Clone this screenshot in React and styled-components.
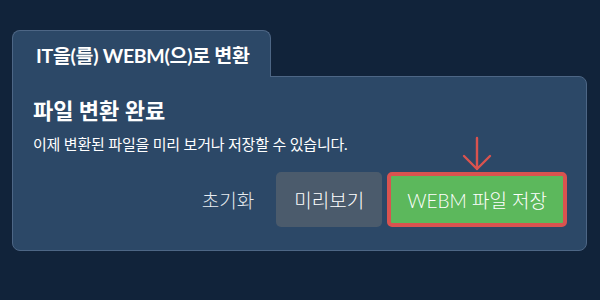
import React from "react";
import styled, { createGlobalStyle } from "styled-components";

const GlobalStyle = createGlobalStyle`
	html, body {
		margin: 0;
		background: #11233a;
	}
	body {
		font-family: Lato, "Noto Sans CJK KR", sans-serif;
		color: #fff;
	}
`;

const Page = styled.div`
	width: 600px;
	height: 300px;
	box-sizing: border-box;
	padding: 30px 13px 0 12px;
	display: flex;
	flex-direction: column;
	align-items: flex-start;
`;

const Tab = styled.div`
	position: relative;
	z-index: 1;
	margin-bottom: -1px;
	box-sizing: border-box;
	width: 259px;
	height: 47px;
	padding: 0 0 0 23px;
	display: flex;
	align-items: center;
	background: #2c4867;
	border: 1px solid #4d6685;
	border-bottom: none;
	border-radius: 8px 8px 0 0;
	font-size: 19.5px;
	font-weight: 700;
	letter-spacing: -0.3px;
`;

const Panel = styled.div`
	align-self: stretch;
	box-sizing: border-box;
	height: 175px;
	padding: 19px 19px 0 20px;
	background: #2c4867;
	border: 1px solid #4d6685;
	border-radius: 0 8px 8px 8px;
`;

const Title = styled.h2`
	margin: 0;
	font-size: 22px;
	font-weight: 700;
	line-height: 30px;
`;

const Subtitle = styled.p`
	margin: 7px 0 0;
	font-size: 15px;
	line-height: 22px;
	letter-spacing: -0.2px;
`;

const Actions = styled.div`
	display: flex;
	justify-content: flex-end;
	align-items: center;
	margin-top: 17px;
`;

const TextButton = styled.button`
	background: none;
	border: none;
	padding: 0;
	margin-right: 22px;
	color: #e6ebf0;
	font-family: inherit;
	font-size: 19px;
	font-weight: 300;
	cursor: pointer;
`;

const Button = styled.button`
	position: relative;
	box-sizing: border-box;
	height: 55px;
	padding: 0 ${p => (p.$primary ? "16px" : "18px")};
	margin-left: ${p => (p.$primary ? "5px" : "0")};
	background: ${p => (p.$primary ? "#5cb85c" : "#4b5b6c")};
	border: ${p => (p.$primary ? "4px solid #d9534f" : "none")};
	border-radius: 5px;
	color: #fff;
	font-family: inherit;
	font-size: 19px;
	font-weight: 300;
	cursor: pointer;
`;

const Arrow = styled.svg`
	position: absolute;
	left: 50%;
	top: -40px;
	transform: translateX(-50%);
`;

export default function App() {
	return (
		<>
			<GlobalStyle />
			<Page>
				<Tab>IT을(를) WEBM(으)로 변환</Tab>
				<Panel>
					<Title>파일 변환 완료</Title>
					<Subtitle>이제 변환된 파일을 미리 보거나 저장할 수 있습니다.</Subtitle>
					<Actions>
						<TextButton>초기화</TextButton>
						<Button>미리보기</Button>
						<Button $primary>
							WEBM 파일 저장
							<Arrow width="30" height="36" viewBox="0 0 30 36" fill="none">
								<path
									d="M15 2 V33 M2 20 L15 33 L28 20"
									stroke="#d9534f"
									strokeWidth="2.4"
									strokeLinecap="round"
									strokeLinejoin="round"
								/>
							</Arrow>
						</Button>
					</Actions>
				</Panel>
			</Page>
		</>
	);
}
